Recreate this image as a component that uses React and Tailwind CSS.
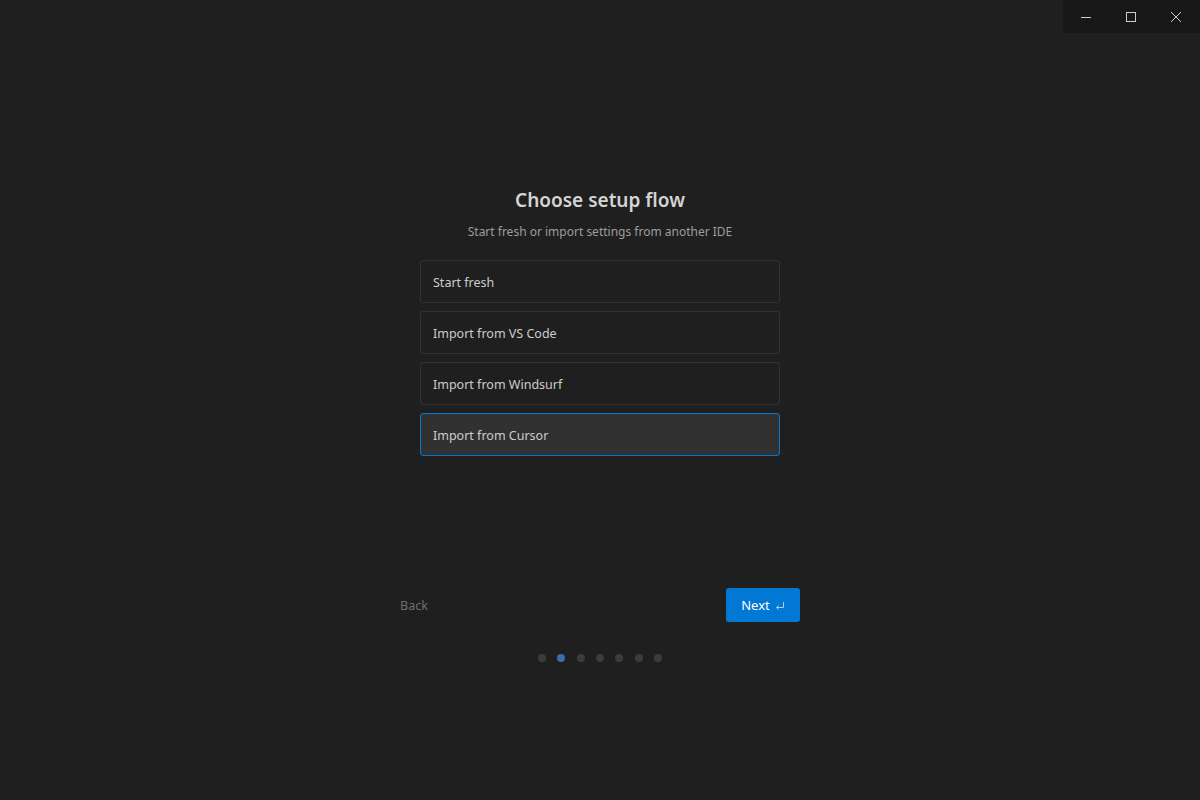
import React, { useState } from 'react';

const options = ['Start fresh', 'Import from VS Code', 'Import from Windsurf', 'Import from Cursor'];

function WindowControls() {
  return (
    <div className="flex h-[33px] w-[137px] bg-[#181818] text-[#cccccc]">
      <button className="flex h-full w-[45px] items-center justify-center">
        <svg width="10" height="10" viewBox="0 0 10 10">
          <path d="M0 5.5h10" stroke="currentColor" strokeWidth="1" />
        </svg>
      </button>
      <button className="flex h-full w-[46px] items-center justify-center">
        <svg width="10" height="10" viewBox="0 0 10 10">
          <rect x="0.5" y="0.5" width="9" height="9" fill="none" stroke="currentColor" strokeWidth="1" />
        </svg>
      </button>
      <button className="flex h-full w-[46px] items-center justify-center pr-[2px]">
        <svg width="10" height="10" viewBox="0 0 10 10">
          <path d="M0 0l10 10M10 0L0 10" stroke="currentColor" strokeWidth="1" />
        </svg>
      </button>
    </div>
  );
}

export default function App() {
  const [selected, setSelected] = useState(3);
  const step = 1;

  return (
    <div
      className="flex h-[800px] w-[1200px] flex-col bg-[#1f1f1f] text-[#cccccc]"
      style={{ fontFamily: '"Noto Sans", "Open Sans", sans-serif' }}
    >
      <div className="flex justify-end">
        <WindowControls />
      </div>

      <div className="mt-[153px] flex flex-col items-center">
        <h1 className="text-[19px] font-semibold leading-[28px] text-[#d4d4d4]">Choose setup flow</h1>
        <p className="mt-[8px] text-[12px] leading-[20px] text-[#9d9d9d]">
          Start fresh or import settings from another IDE
        </p>

        <div className="mt-[18px] flex w-[360px] flex-col gap-2">
          {options.map((opt, i) => (
            <button
              key={opt}
              onClick={() => setSelected(i)}
              className={
                i === selected
                  ? 'flex h-[43px] items-center rounded-[3px] border border-[#0078d4] bg-[#313131] px-3 pt-[3px] text-left text-[12.5px] text-[#cccccc]'
                  : 'flex h-[43px] items-center rounded-[3px] border border-[#333333] bg-[#1f1f1f] px-3 pt-[3px] text-left text-[12.5px] text-[#cccccc]'
              }
            >
              {opt}
            </button>
          ))}
        </div>

        <div className="mt-[132px] flex w-[400px] items-center justify-between">
          <button className="pt-[3px] text-[12.5px] text-[#6e6e6e]">Back</button>
          <button className="flex h-[34px] w-[74px] items-center justify-center gap-[5px] rounded-[3px] bg-[#0078d4] pt-[2px] text-[13px] text-white">
            Next
            <svg width="10" height="10" viewBox="0 0 10 10" className="text-[#a8cdf0]">
              <path d="M8.5 1v5.5H1.5M3.5 4.5l-2 2 2 2" fill="none" stroke="currentColor" strokeWidth="1" />
            </svg>
          </button>
        </div>

        <div className="mt-[32px] flex items-center gap-[11.3px]">
          {[0, 1, 2, 3, 4, 5, 6].map((d) => (
            <span
              key={d}
              className={
                d === step
                  ? 'h-2 w-2 rounded-full bg-[#3b6ea8]'
                  : 'h-2 w-2 rounded-full bg-[#3c3c3c]'
              }
            />
          ))}
        </div>
      </div>
    </div>
  );
}
